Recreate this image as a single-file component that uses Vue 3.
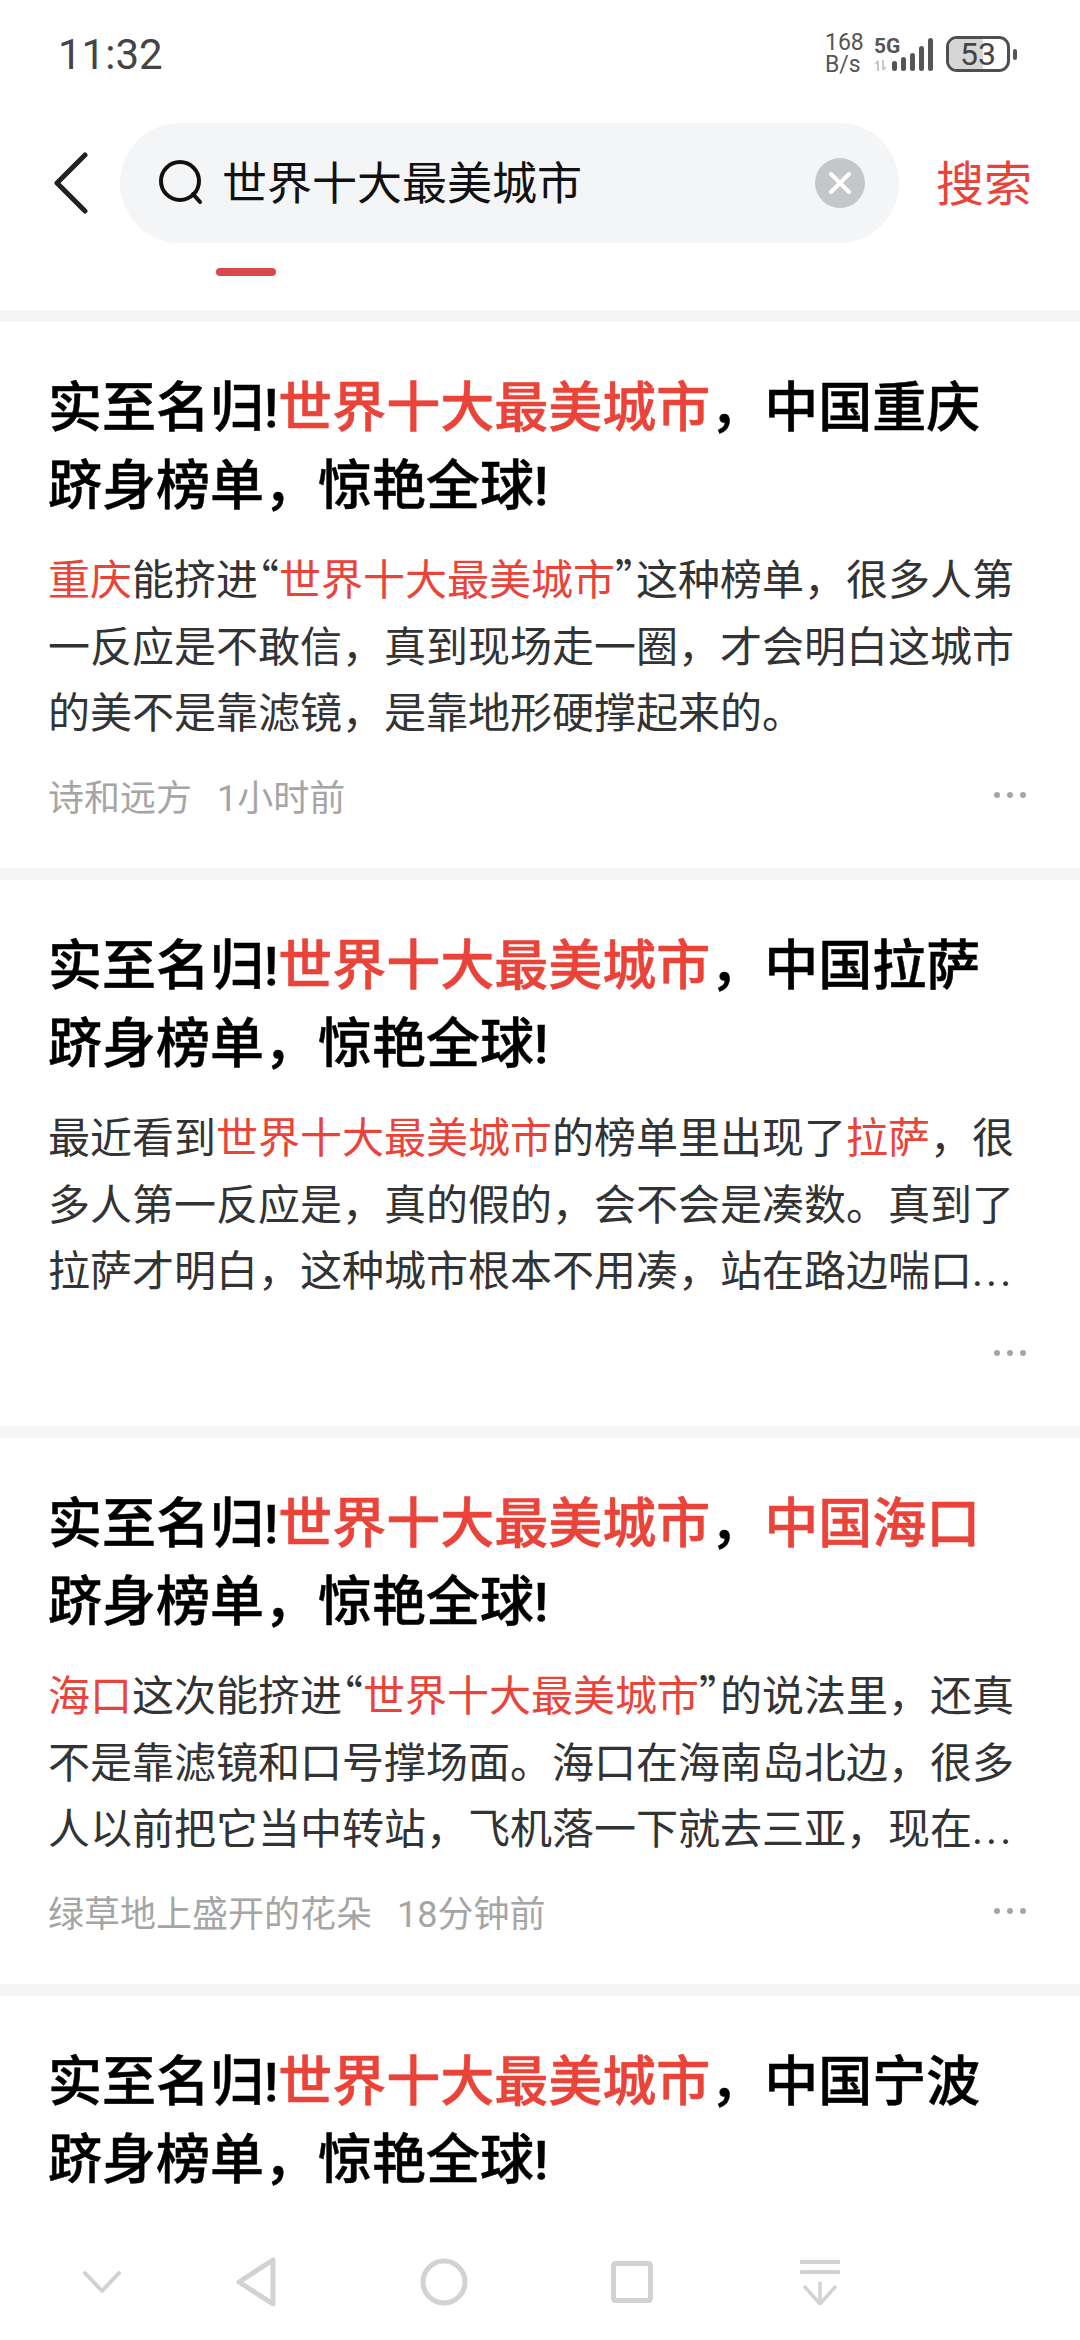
<template>
  <div class="page">
    <div class="status">
      <span class="time">11:32</span>
      <div class="status-right">
        <div class="speed"><span>168</span><span>B/s</span></div>
        <div class="net">
          <span class="g5">5G</span>
          <svg class="arrows" width="13" height="11" viewBox="0 0 13 11">
            <path d="M4 11V1M1.500 4 4 1M9 0v10M11.500 7 9 10" stroke="#c8c8c8" stroke-width="2" fill="none" />
          </svg>
        </div>
        <div class="bars">
          <i v-for="h in bars" :key="h" :style="{ height: h + 'px' }"></i>
        </div>
        <div class="battery">
          <div class="batt-body"><div class="batt-fill"></div><span>53</span></div>
          <div class="batt-tip"></div>
        </div>
      </div>
    </div>

    <div class="search-row">
      <svg class="back" width="36" height="62" viewBox="0 0 36 62">
        <path d="M32 3 4 31l28 28" fill="none" stroke="#222" stroke-width="5" stroke-linecap="round" stroke-linejoin="round" />
      </svg>
      <div class="pill">
        <svg class="lens" width="46" height="46" viewBox="0 0 46 46">
          <circle cx="22" cy="21" r="19" fill="none" stroke="#111" stroke-width="4" />
          <path d="M35 34l7 8" stroke="#111" stroke-width="4" stroke-linecap="round" />
        </svg>
        <span class="query">世界十大最美城市</span>
        <div class="clear">
          <svg width="24" height="24" viewBox="0 0 24 24">
            <path d="M3 3l18 18M21 3 3 21" stroke="#fff" stroke-width="4" stroke-linecap="round" />
          </svg>
        </div>
      </div>
      <span class="go">搜索</span>
    </div>
    <div class="tabs"><div class="tab-line"></div></div>

    <article v-for="card in cards" :key="card.city" class="card">
      <h2 class="title">
        实至名归!<em>世界十大最美城市</em>，<em v-if="card.redCity">中国{{ card.city }}</em><template v-else>中国{{ card.city }}</template>
        <br />跻身榜单，惊艳全球!
      </h2>
      <p v-if="card.body" class="body">
        <template v-for="(part, i) in card.body" :key="i">
          <em v-if="part.red">{{ part.text }}</em>
          <span v-else-if="part.quote" class="quote">{{ part.text }}</span>
          <span v-else-if="part.more" class="more">{{ part.text }}</span>
          <template v-else>{{ part.text }}</template>
        </template>
      </p>
      <div v-if="card.body" class="meta">
        <span v-if="card.author" class="author">{{ card.author }}</span>
        <span v-if="card.time">{{ card.time }}</span>
        <div class="dots"><i></i><i></i><i></i></div>
      </div>
    </article>

    <div class="nav">
      <div class="nav-item first">
        <svg width="40" height="24" viewBox="0 0 40 24">
          <path d="M3 3l17 18L37 3" fill="none" stroke="#d2d2d2" stroke-width="4" stroke-linecap="round" stroke-linejoin="round" />
        </svg>
      </div>
      <div class="nav-item">
        <svg width="42" height="50" viewBox="0 0 42 50">
          <path d="M38 3v44L4 25z" fill="none" stroke="#d2d2d2" stroke-width="5" stroke-linejoin="round" />
        </svg>
      </div>
      <div class="nav-item">
        <svg width="50" height="50" viewBox="0 0 50 50">
          <circle cx="25" cy="25" r="21" fill="none" stroke="#d2d2d2" stroke-width="5" />
        </svg>
      </div>
      <div class="nav-item">
        <svg width="46" height="46" viewBox="0 0 46 46">
          <rect x="4.500" y="4.500" width="37" height="37" rx="2" fill="none" stroke="#d2d2d2" stroke-width="5" />
        </svg>
      </div>
      <div class="nav-item">
        <svg width="40" height="46" viewBox="0 0 40 46">
          <path d="M1 3h38M1 13h38" stroke="#d2d2d2" stroke-width="4" stroke-linecap="round" />
          <path d="M20 24v20M5 28l15 17 15-17" fill="none" stroke="#d2d2d2" stroke-width="3.500" stroke-linecap="round" stroke-linejoin="round" />
        </svg>
      </div>
    </div>
  </div>
</template>

<script setup>
const bars = [10, 14, 18, 25, 33]

const cards = [
  {
    city: '重庆',
    author: '诗和远方',
    time: '1小时前',
    body: [
      { text: '重庆', red: true },
      { text: '能挤进' },
      { text: '“', quote: true },
      { text: '世界十大最美城市', red: true },
      { text: '”', quote: true },
      { text: '这种榜单，很多人第一反应是不敢信，真到现场走一圈，才会明白这城市的美不是靠滤镜，是靠地形硬撑起来的。' }
    ]
  },
  {
    city: '拉萨',
    body: [
      { text: '最近看到' },
      { text: '世界十大最美城市', red: true },
      { text: '的榜单里出现了' },
      { text: '拉萨', red: true },
      { text: '，很多人第一反应是，真的假的，会不会是凑数。真到了拉萨才明白，这种城市根本不用凑，站在路边喘口' },
      { text: '...', more: true }
    ]
  },
  {
    city: '海口',
    redCity: true,
    author: '绿草地上盛开的花朵',
    time: '18分钟前',
    body: [
      { text: '海口', red: true },
      { text: '这次能挤进' },
      { text: '“', quote: true },
      { text: '世界十大最美城市', red: true },
      { text: '”', quote: true },
      { text: '的说法里，还真不是靠滤镜和口号撑场面。海口在海南岛北边，很多人以前把它当中转站，飞机落一下就去三亚，现在' },
      { text: '...', more: true }
    ]
  },
  { city: '宁波' }
]
</script>

<style>
html, body { background: #fff; }
</style>

<style scoped>
.page {
  position: relative;
  width: 1080px;
  height: 2340px;
  overflow: hidden;
  background: #fff;
  font-family: Roboto, "Noto Sans CJK SC", sans-serif;
}

.status {
  height: 108px;
  padding: 0 63px 0 58px;
  display: flex;
  align-items: center;
  justify-content: space-between;
  box-sizing: border-box;
}

.time {
  font-size: 42px;
  color: #444;
}

.status-right {
  display: flex;
  align-items: center;
}

.speed {
  display: flex;
  flex-direction: column;
  font-size: 23px;
  line-height: 22px;
  color: #555;
  width: 49px;
}

.net {
  display: flex;
  flex-direction: column;
  width: 20px;
}

.g5 {
  font-size: 21px;
  line-height: 19px;
  font-weight: 700;
  color: #555;
}

.arrows { margin-top: 4px; }

.bars {
  display: flex;
  align-items: flex-end;
  gap: 4px;
  height: 33px;
  margin: 0 13px 0 -2px;
}

.bars i {
  display: block;
  width: 5px;
  border-radius: 3px;
  background: #555;
}

.battery {
  display: flex;
  align-items: center;
  gap: 3px;
}

.batt-body {
  position: relative;
  width: 64px;
  height: 36px;
  box-sizing: border-box;
  border: 3px solid #4f4f4f;
  border-radius: 11px;
  overflow: hidden;
  display: flex;
  align-items: center;
  justify-content: center;
}

.batt-fill {
  position: absolute;
  left: 0;
  top: 0;
  bottom: 0;
  width: 34px;
  background: #d6d6d6;
}

.batt-body span {
  position: relative;
  font-size: 32px;
  line-height: 30px;
  color: #444;
}

.batt-tip {
  width: 4px;
  height: 11px;
  border-radius: 2px;
  background: #555;
}

.search-row {
  margin-top: 15px;
  height: 120px;
  display: flex;
  align-items: center;
  padding-left: 53px;
}

.back { flex: none; }

.pill {
  width: 779px;
  height: 120px;
  margin-left: 31px;
  box-sizing: border-box;
  padding: 0 34px 0 38px;
  border-radius: 60px;
  background: #f4f5f7;
  display: flex;
  align-items: center;
}

.query {
  margin: 0 0 6px 18px;
  font-size: 45px;
  color: #111;
  flex: 1;
}

.clear {
  width: 50px;
  height: 50px;
  border-radius: 50%;
  background: #c4c6c8;
  display: flex;
  align-items: center;
  justify-content: center;
}

.go {
  margin: 0 0 6px 37px;
  font-size: 48px;
  color: #ea4339;
}

.tabs {
  height: 67px;
  padding: 25px 0 0 216px;
  box-sizing: border-box;
}

.tab-line {
  width: 60px;
  height: 8px;
  border-radius: 4px;
  background: #d9484f;
}

.card {
  border-top: 12px solid #f4f5f7;
  height: 558px;
  box-sizing: border-box;
  padding: 48px 48px 0;
}

em {
  font-style: normal;
  color: #ea4339;
}

.title {
  margin: 0;
  font-size: 54px;
  line-height: 78px;
  font-weight: 500;
  -webkit-text-stroke: 0.5px currentColor;
  color: #000;
}

.body {
  margin: 22px 0 0;
  font-size: 42px;
  line-height: 66.500px;
  color: #333;
}

.quote {
  font-family: "Noto Sans CJK SC", sans-serif;
  font-feature-settings: "halt";
  line-height: 0;
}

.more { letter-spacing: 3px; }

.meta {
  margin-top: 21px;
  height: 52px;
  display: flex;
  align-items: center;
  font-size: 36px;
  color: #a5a5a5;
}

.author { margin-right: 25px; }

.dots {
  margin-left: auto;
  margin-right: 6px;
  display: flex;
  gap: 7px;
}

.dots i {
  display: block;
  width: 6px;
  height: 6px;
  border-radius: 50%;
  background: #a5a5a5;
}

.nav {
  position: absolute;
  left: 0;
  right: 0;
  bottom: 0;
  height: 140px;
  padding-top: 24px;
  box-sizing: border-box;
  background: #fff;
  display: flex;
  align-items: flex-start;
}

.nav-item {
  width: 188px;
  height: 116px;
  display: flex;
  align-items: center;
  justify-content: center;
}

.nav-item.first {
  width: 120px;
  padding-left: 42px;
}
</style>
